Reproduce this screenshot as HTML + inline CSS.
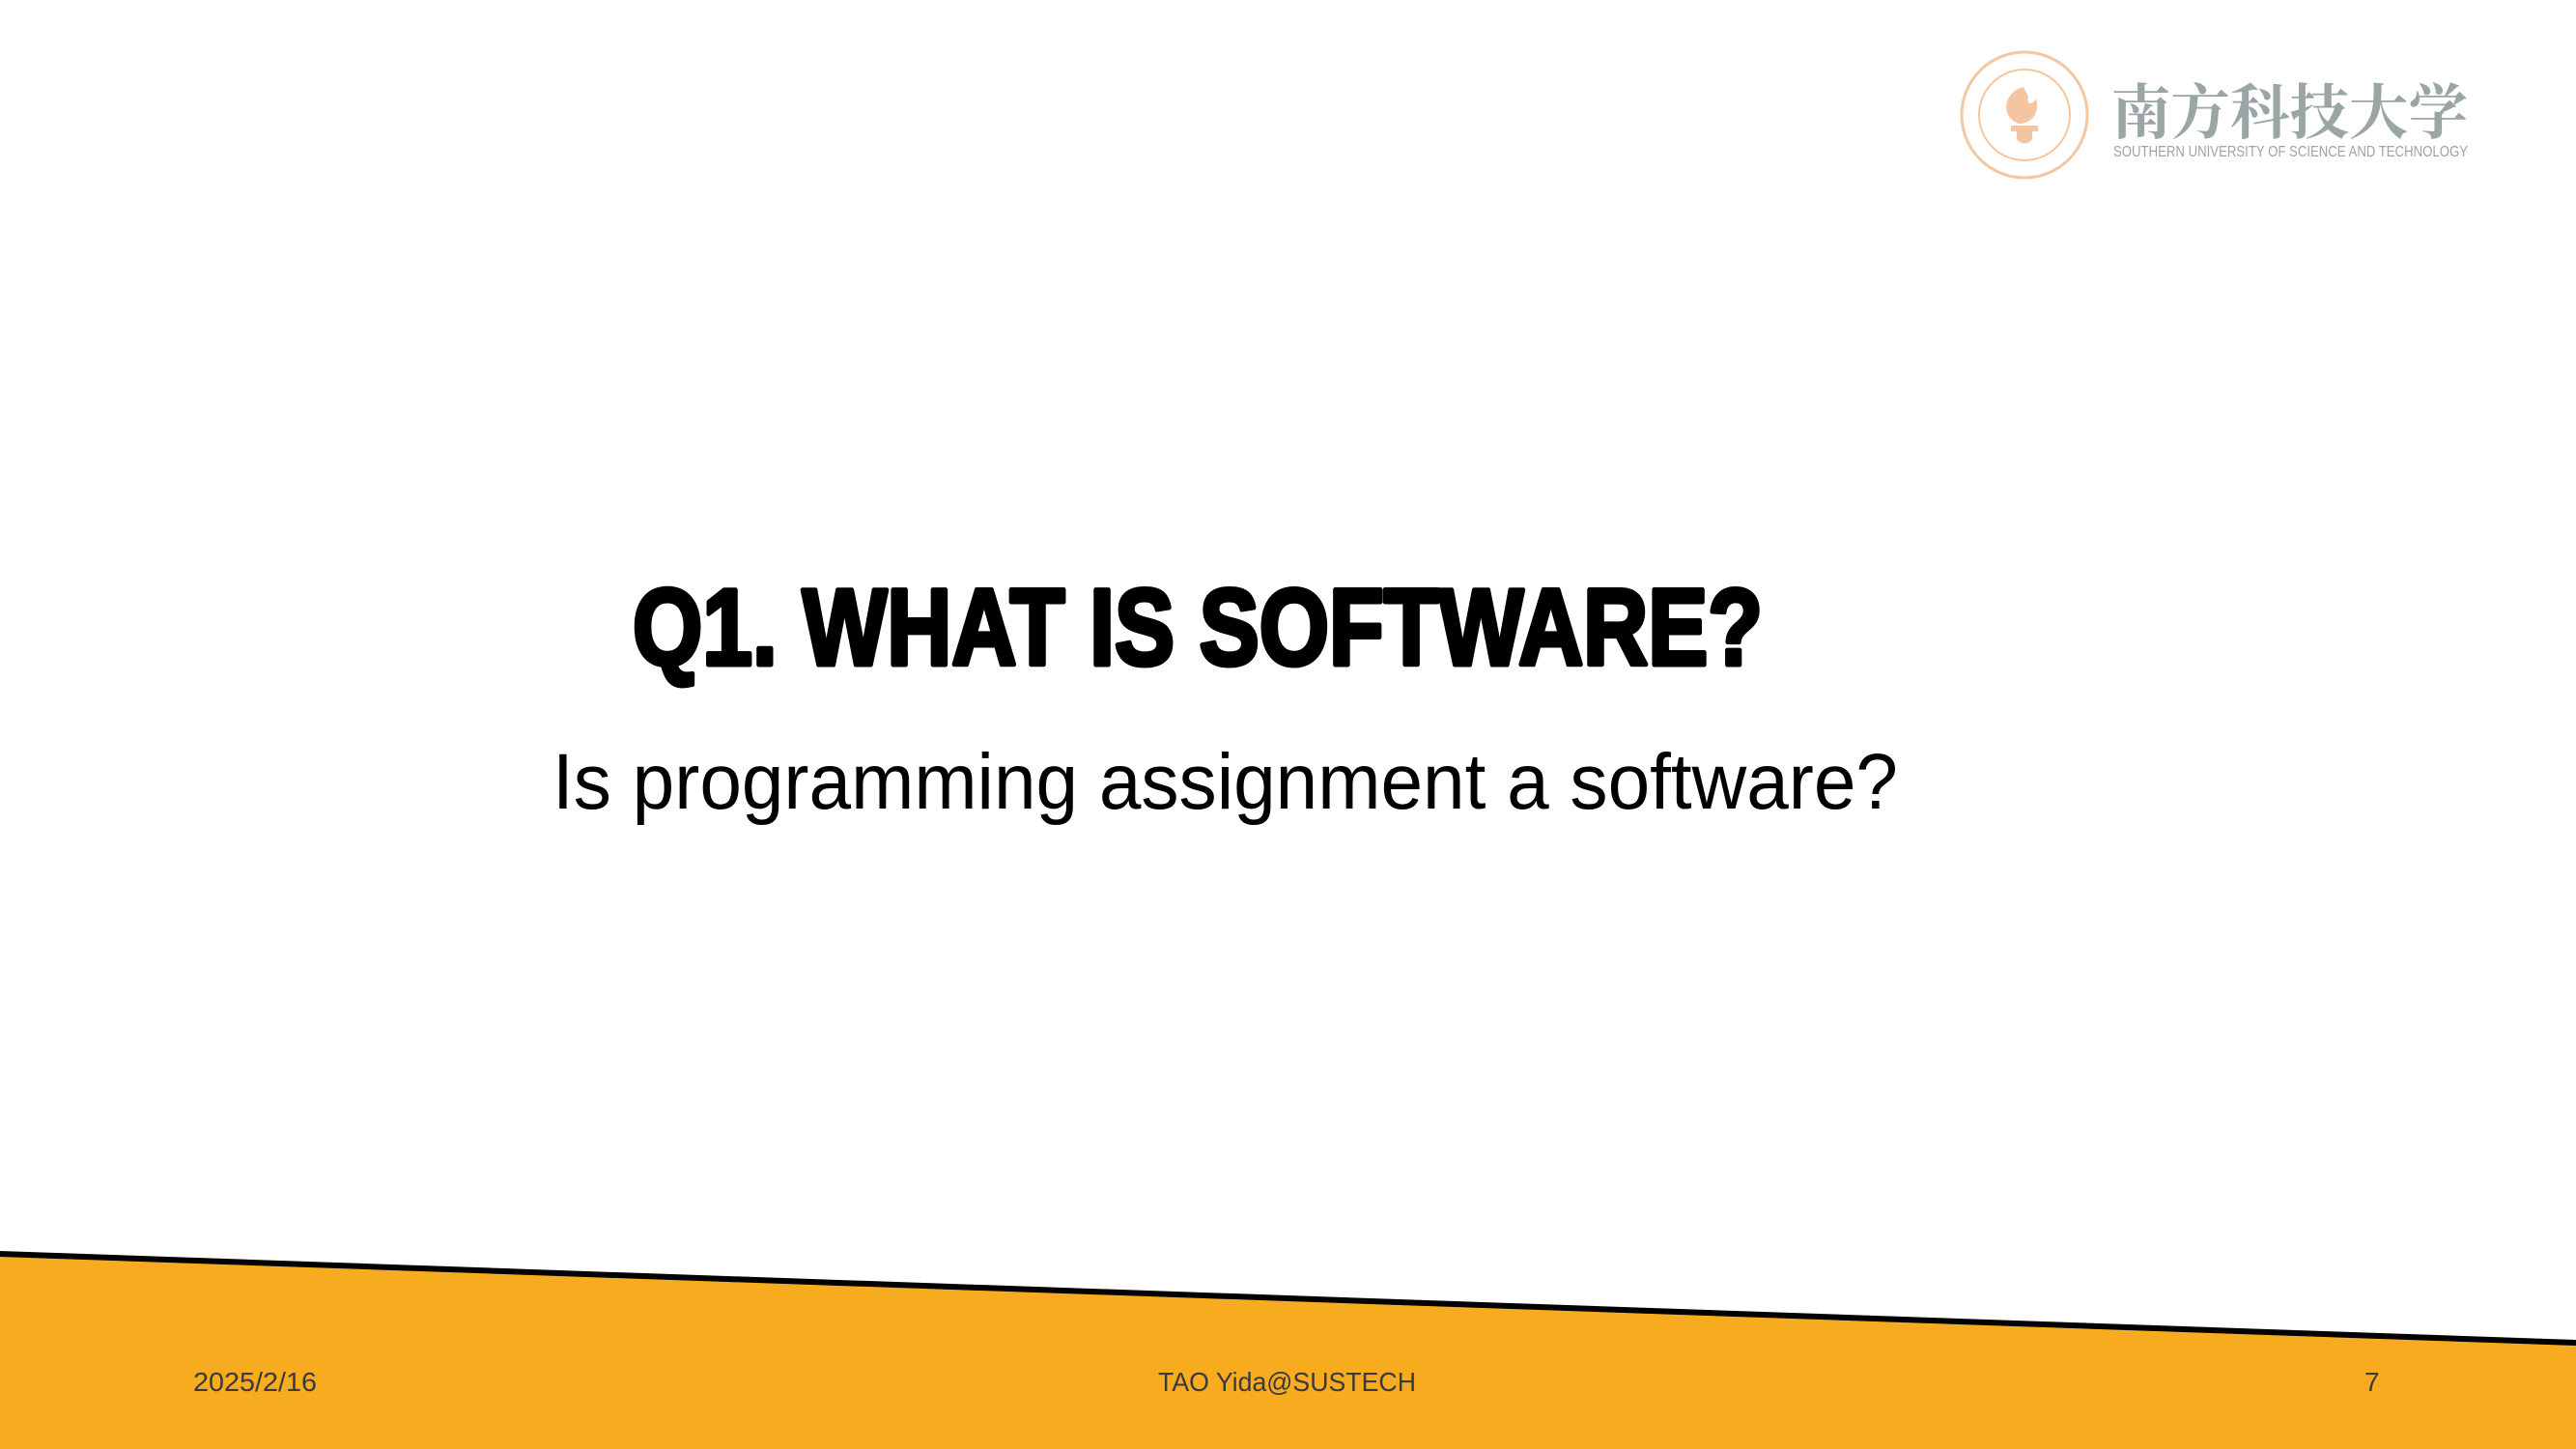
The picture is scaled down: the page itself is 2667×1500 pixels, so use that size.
<!DOCTYPE html>
<html><head><meta charset="utf-8"><style>
html,body{margin:0;padding:0;background:#fff;}
svg{display:block}
</style></head><body>
<svg width="2667" height="1500" viewBox="0 0 2667 1500" xmlns="http://www.w3.org/2000/svg">
<rect width="2667" height="1500" fill="#fff"/>
<polygon points="0,1298 2667,1390 2667,1500 0,1500" fill="#F7AB1E"/>
<line x1="0" y1="1298" x2="2667" y2="1390" stroke="#000" stroke-width="6"/>
<g font-family="Liberation Sans, sans-serif" fill="#3a3a3a" font-size="28">
<text x="200" y="1440" textLength="128" lengthAdjust="spacingAndGlyphs">2025/2/16</text>
<text x="1199" y="1440" textLength="267" lengthAdjust="spacingAndGlyphs">TAO Yida@SUSTECH</text>
<text x="2448" y="1440">7</text>
</g>
<text x="655" y="688" font-family="Liberation Sans, sans-serif" font-weight="bold" font-size="112" fill="#000" textLength="1170" lengthAdjust="spacingAndGlyphs" stroke="#000" stroke-width="5" stroke-linejoin="round">Q1. WHAT IS SOFTWARE?</text>
<text x="572" y="837" font-family="Liberation Sans, sans-serif" font-size="82" fill="#000" textLength="1393" lengthAdjust="spacingAndGlyphs">Is programming assignment a software?</text>
<g>
<circle cx="2096" cy="119" r="65" fill="none" stroke="#f5c7a0" stroke-width="3"/>
<circle cx="2096" cy="119" r="47" fill="none" stroke="#f5c7a0" stroke-width="2"/>
<path d="M2095 90 C2075 95 2070 120 2090 128 C2105 128 2112 115 2108 102 C2104 110 2098 108 2100 100 Z" fill="#f5c4a0"/>
<path d="M2082 130 h28 v6 h-6 v8 c-4 6 -12 6 -16 0 v-8 h-6 z" fill="#f5c4a0"/>
<text x="2186" y="138" font-family="Noto Serif CJK SC, Noto Sans CJK SC, serif" font-size="62" font-weight="bold" fill="#9aa6a6" textLength="369" lengthAdjust="spacingAndGlyphs">南方科技大学</text>
<text x="2188" y="162" font-family="Liberation Sans, sans-serif" font-size="16" fill="#9aa6a6" textLength="367" lengthAdjust="spacingAndGlyphs">SOUTHERN UNIVERSITY OF SCIENCE AND TECHNOLOGY</text>
</g>
</svg>
</body></html>
